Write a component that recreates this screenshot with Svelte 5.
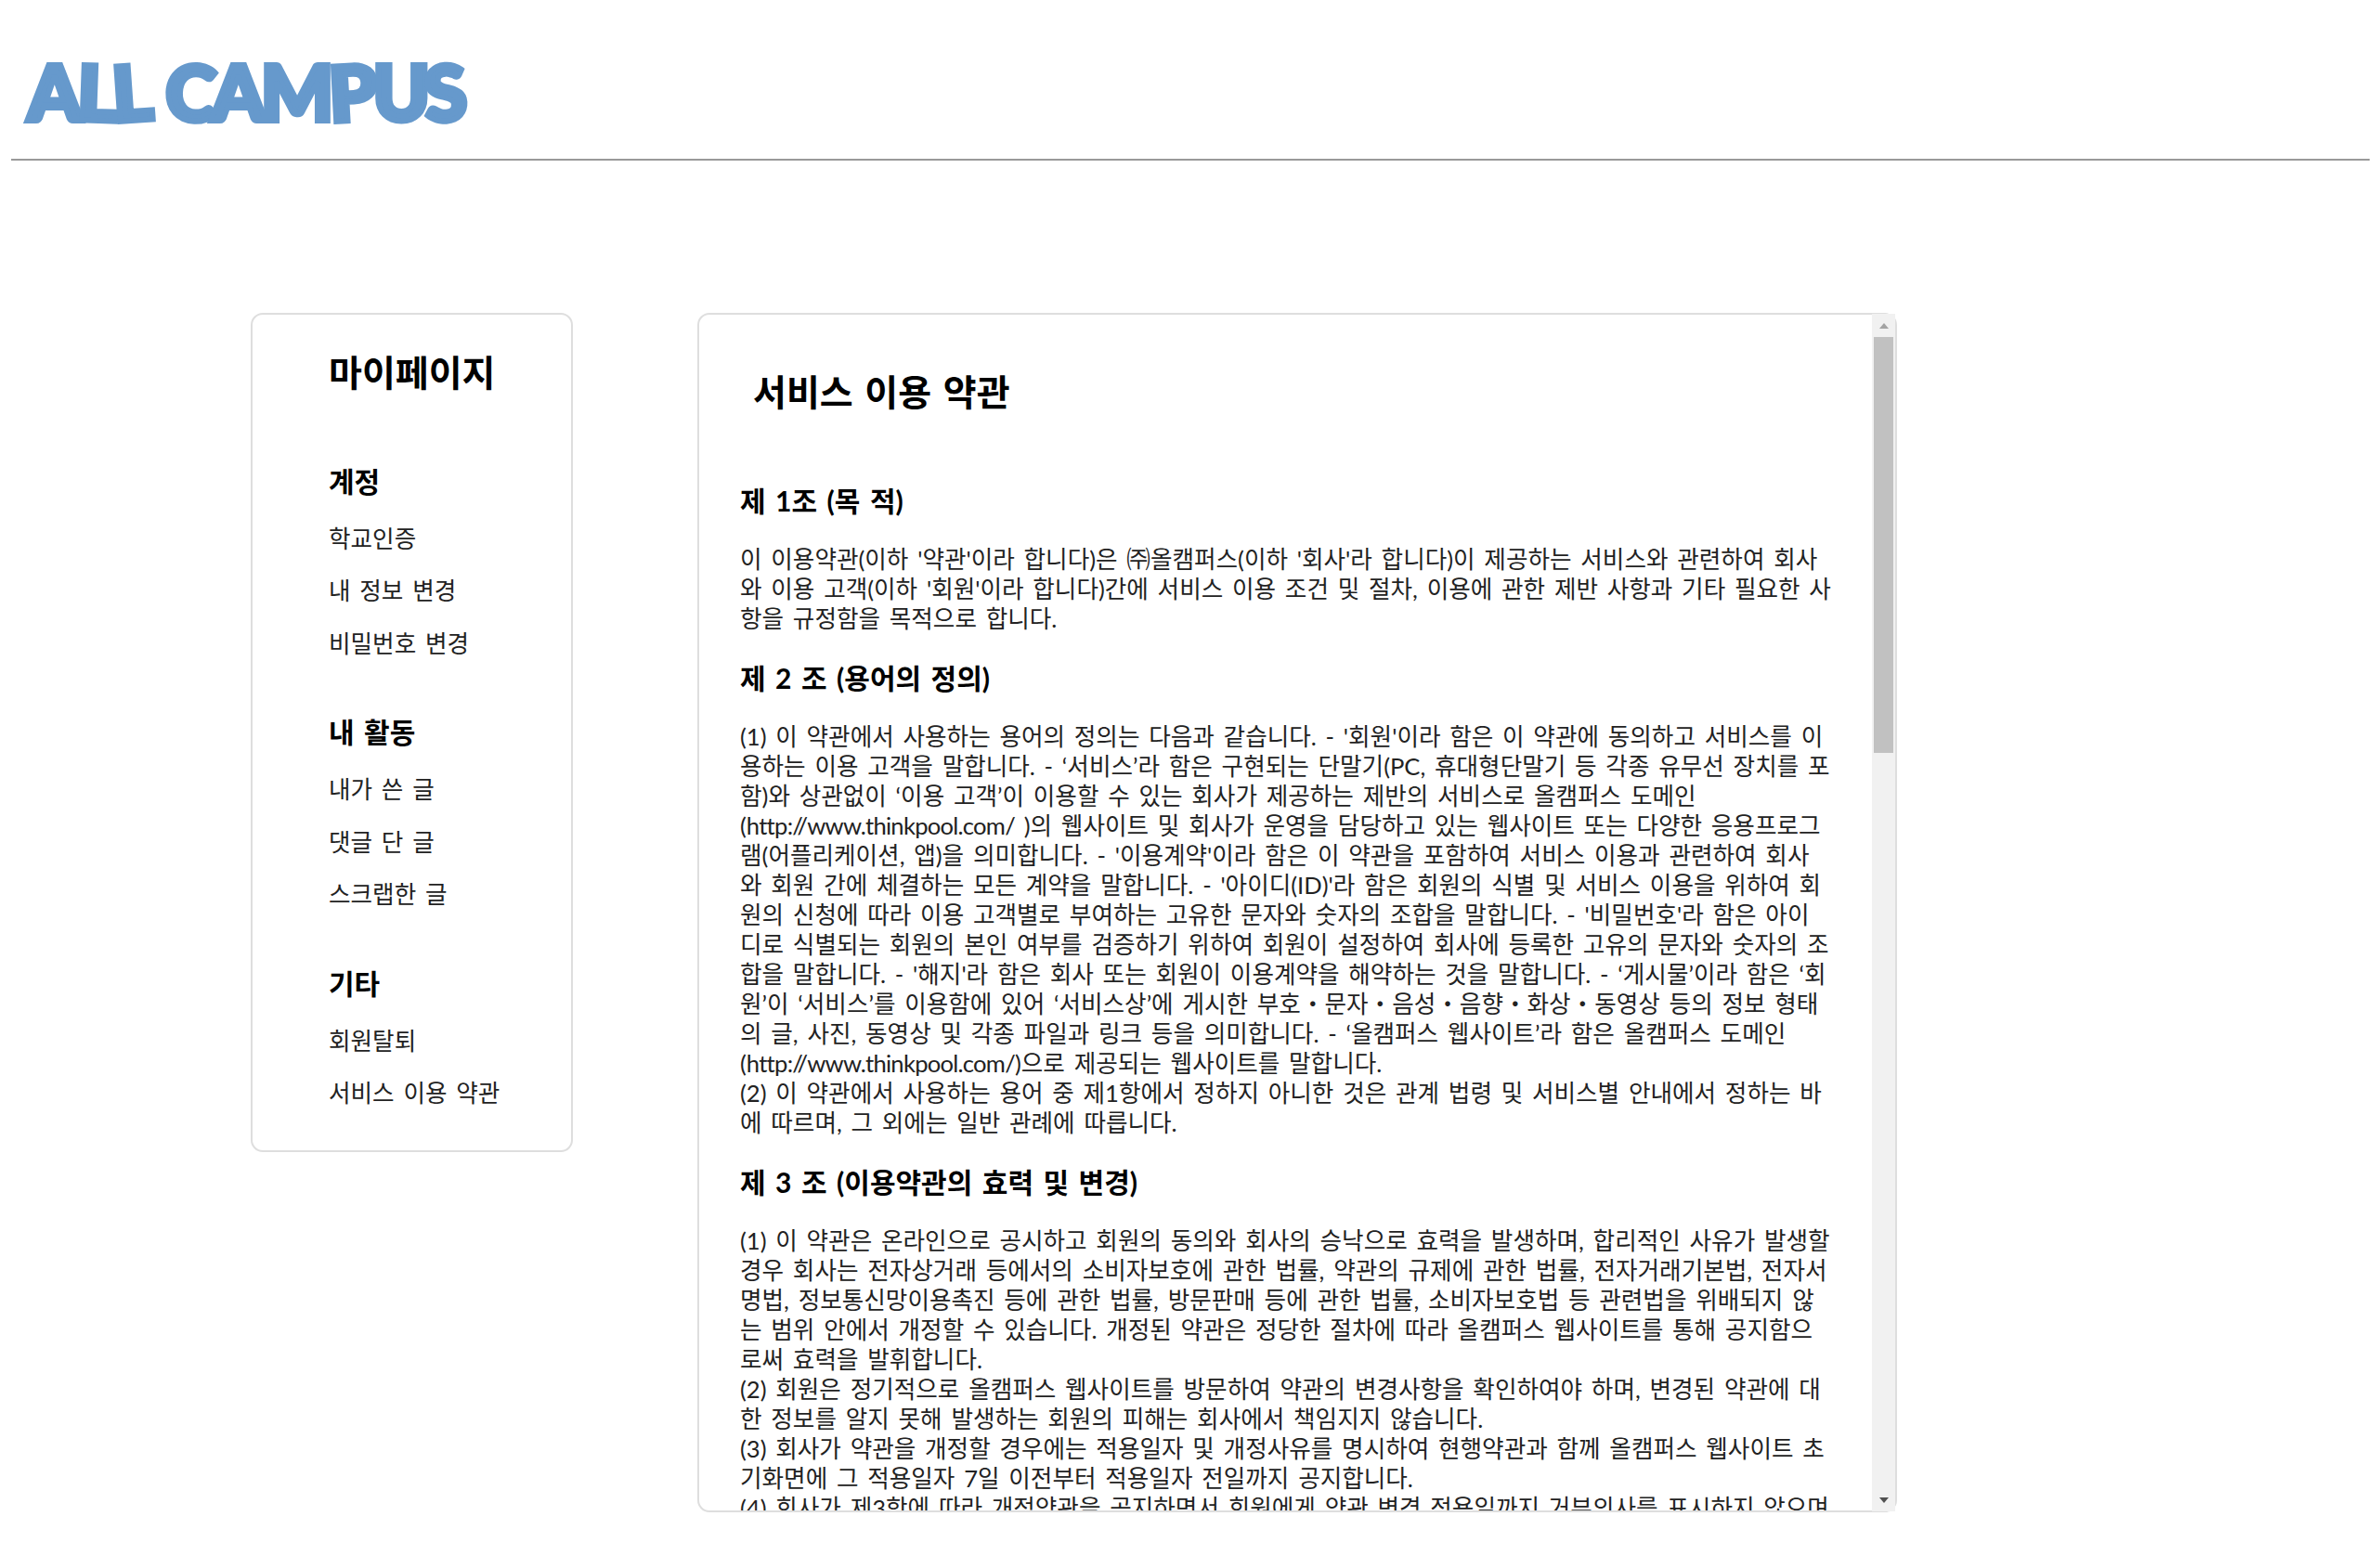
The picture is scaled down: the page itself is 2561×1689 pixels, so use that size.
<script lang="ts">
	// the logo is a wonky hand-cut wordmark, so each letter gets its own tilt
	const logo = [
		{ ch: 'A', tilt: 0 },
		{ ch: 'L', tilt: 2 },
		{ ch: 'L', tilt: -4 },
		{ ch: ' ', tilt: 0 },
		{ ch: 'C', tilt: 2 },
		{ ch: 'A', tilt: 0 },
		{ ch: 'M', tilt: 0 },
		{ ch: 'P', tilt: -3 },
		{ ch: 'U', tilt: 0 },
		{ ch: 'S', tilt: -4 }
	];

	const menu = [
		{ title: '계정', items: ['학교인증', '내 정보 변경', '비밀번호 변경'] },
		{ title: '내 활동', items: ['내가 쓴 글', '댓글 단 글', '스크랩한 글'] },
		{ title: '기타', items: ['회원탈퇴', '서비스 이용 약관'] }
	];

	const articles = [
		{
			title: '제 1조 (목 적)',
			lines: [
				"이 이용약관(이하 '약관'이라 합니다)은 ㈜올캠퍼스(이하 '회사'라 합니다)이 제공하는 서비스와 관련하여 회사",
				"와 이용 고객(이하 '회원'이라 합니다)간에 서비스 이용 조건 및 절차, 이용에 관한 제반 사항과 기타 필요한 사",
				'항을 규정함을 목적으로 합니다.'
			]
		},
		{
			title: '제 2 조 (용어의 정의)',
			lines: [
				"(1) 이 약관에서 사용하는 용어의 정의는 다음과 같습니다. - '회원'이라 함은 이 약관에 동의하고 서비스를 이",
				'용하는 이용 고객을 말합니다. - ‘서비스’라 함은 구현되는 단말기(PC, 휴대형단말기 등 각종 유무선 장치를 포',
				'함)와 상관없이 ‘이용 고객’이 이용할 수 있는 회사가 제공하는 제반의 서비스로 올캠퍼스 도메인',
				'(http://www.thinkpool.com/ )의 웹사이트 및 회사가 운영을 담당하고 있는 웹사이트 또는 다양한 응용프로그',
				"램(어플리케이션, 앱)을 의미합니다. - '이용계약'이라 함은 이 약관을 포함하여 서비스 이용과 관련하여 회사",
				"와 회원 간에 체결하는 모든 계약을 말합니다. - '아이디(ID)'라 함은 회원의 식별 및 서비스 이용을 위하여 회",
				"원의 신청에 따라 이용 고객별로 부여하는 고유한 문자와 숫자의 조합을 말합니다. - '비밀번호'라 함은 아이",
				'디로 식별되는 회원의 본인 여부를 검증하기 위하여 회원이 설정하여 회사에 등록한 고유의 문자와 숫자의 조',
				"합을 말합니다. - '해지'라 함은 회사 또는 회원이 이용계약을 해약하는 것을 말합니다. - ‘게시물’이라 함은 ‘회",
				'원’이 ‘서비스’를 이용함에 있어 ‘서비스상’에 게시한 부호・문자・음성・음향・화상・동영상 등의 정보 형태',
				'의 글, 사진, 동영상 및 각종 파일과 링크 등을 의미합니다. - ‘올캠퍼스 웹사이트’라 함은 올캠퍼스 도메인',
				'(http://www.thinkpool.com/)으로 제공되는 웹사이트를 말합니다.',
				'(2) 이 약관에서 사용하는 용어 중 제1항에서 정하지 아니한 것은 관계 법령 및 서비스별 안내에서 정하는 바',
				'에 따르며, 그 외에는 일반 관례에 따릅니다.'
			]
		},
		{
			title: '제 3 조 (이용약관의 효력 및 변경)',
			lines: [
				'(1) 이 약관은 온라인으로 공시하고 회원의 동의와 회사의 승낙으로 효력을 발생하며, 합리적인 사유가 발생할',
				'경우 회사는 전자상거래 등에서의 소비자보호에 관한 법률, 약관의 규제에 관한 법률, 전자거래기본법, 전자서',
				'명법, 정보통신망이용촉진 등에 관한 법률, 방문판매 등에 관한 법률, 소비자보호법 등 관련법을 위배되지 않',
				'는 범위 안에서 개정할 수 있습니다. 개정된 약관은 정당한 절차에 따라 올캠퍼스 웹사이트를 통해 공지함으',
				'로써 효력을 발휘합니다.',
				'(2) 회원은 정기적으로 올캠퍼스 웹사이트를 방문하여 약관의 변경사항을 확인하여야 하며, 변경된 약관에 대',
				'한 정보를 알지 못해 발생하는 회원의 피해는 회사에서 책임지지 않습니다.',
				'(3) 회사가 약관을 개정할 경우에는 적용일자 및 개정사유를 명시하여 현행약관과 함께 올캠퍼스 웹사이트 초',
				'기화면에 그 적용일자 7일 이전부터 적용일자 전일까지 공지합니다.',
				'(4) 회사가 제3항에 따라 개정약관을 공지하면서 회원에게 약관 변경 적용일까지 거부의사를 표시하지 않으며'
			]
		}
	];

	const urlPart = /(http:\S+?\/(?=[ )]|\)))/;
</script>

<header class="top">
	<div class="logo">
		{#each logo as letter}
			<span style="transform: rotate({letter.tilt}deg)">{letter.ch}</span>
		{/each}
	</div>
	<div class="rule"></div>
</header>

<main class="page">
	<nav class="side">
		<h2 class="side-title">마이페이지</h2>
		{#each menu as group}
			<section class="group">
				<h3>{group.title}</h3>
				{#each group.items as item}
					<div class="item">{item}</div>
				{/each}
			</section>
		{/each}
	</nav>

	<div class="terms">
		<div class="terms-scroll">
			<h1>서비스 이용 약관</h1>
			{#each articles as article}
				<h4>{article.title}</h4>
				<p>
					{#each article.lines as line}
						<span class="line">
							{#each line.split(urlPart) as part}
								{#if part.startsWith('http:')}
									<span class="url">{part}</span>
								{:else}
									{part}
								{/if}
							{/each}
						</span>
					{/each}
				</p>
			{/each}
		</div>
		<div class="scrollbar" aria-hidden="true">
			<div class="arrow"><i class="up"></i></div>
			<div class="track"><div class="thumb"></div></div>
			<div class="arrow"><i class="down"></i></div>
		</div>
	</div>
</main>

<style>
	:global(body) {
		margin: 0;
		background: #fff;
		color: #000;
		font-family: Lato, 'Noto Sans CJK KR', sans-serif;
		word-spacing: 0.2em;
	}

	.top {
		padding: 0 9px 0 12px;
	}

	.logo {
		display: flex;
		height: 171px;
		padding: 53px 0 0 18px;
		box-sizing: border-box;
		overflow: hidden;
		font-family: Lato, 'Liberation Sans', sans-serif;
		font-weight: 900;
		font-size: 82px;
		line-height: 90px;
		letter-spacing: -4.4px;
		white-space: pre;
		color: #6699cc;
		-webkit-text-stroke: 6px #6699cc;
	}

	.logo span {
		display: block;
	}

	.rule {
		height: 2px;
		background: #999;
	}

	.page {
		display: flex;
		align-items: flex-start;
		gap: 134px;
		margin: 164px 0 0 270px;
	}

	.side {
		width: 347px;
		box-sizing: border-box;
		padding: 37px 0 34px 82px;
		border: 2px solid #dedede;
		border-radius: 13px;
		flex: none;
	}

	.side-title {
		margin: 0 0 72px;
		font-size: 39px;
		line-height: 50px;
		font-weight: 700;
	}

	.group {
		margin-top: 47.5px;
	}

	.group h3 {
		margin: 0 0 14px;
		font-size: 30px;
		line-height: 40px;
		font-weight: 700;
	}

	.item {
		font-size: 25.6px;
		line-height: 56.3px;
		white-space: nowrap;
		color: #222;
	}

	.terms {
		position: relative;
		width: 1292px;
		height: 1292px;
		box-sizing: border-box;
		border: 2px solid #dedede;
		border-radius: 13px;
		flex: none;
	}

	.terms-scroll {
		height: 100%;
		box-sizing: border-box;
		overflow: hidden;
		padding: 58px 0 0 44px;
	}

	.scrollbar {
		position: absolute;
		top: -1px;
		right: 0;
		bottom: -1px;
		width: 25px;
		display: flex;
		flex-direction: column;
		background: #f1f1f1;
	}

	.arrow {
		height: 25px;
		flex: none;
		display: flex;
		align-items: center;
		justify-content: center;
	}

	.arrow i {
		width: 0;
		height: 0;
		border-left: 5.5px solid transparent;
		border-right: 5.5px solid transparent;
	}

	.arrow .up {
		border-bottom: 6px solid #a3a3a3;
	}

	.arrow .down {
		border-top: 6px solid #505050;
	}

	.track {
		flex: 1;
		padding: 0 2px;
	}

	.thumb {
		height: 448px;
		background: #c1c1c1;
	}

	h1 {
		margin: 0 0 72px 14px;
		font-size: 39px;
		line-height: 50px;
		font-weight: 700;
	}

	h4 {
		margin: 0 0 27px;
		font-size: 30px;
		line-height: 40px;
		font-weight: 700;
	}

	p {
		margin: 0 0 28px;
		font-size: 25.6px;
		line-height: 32px;
		color: #222;
	}

	.line {
		display: block;
		white-space: nowrap;
	}

	.url {
		letter-spacing: -0.75px;
	}
</style>
